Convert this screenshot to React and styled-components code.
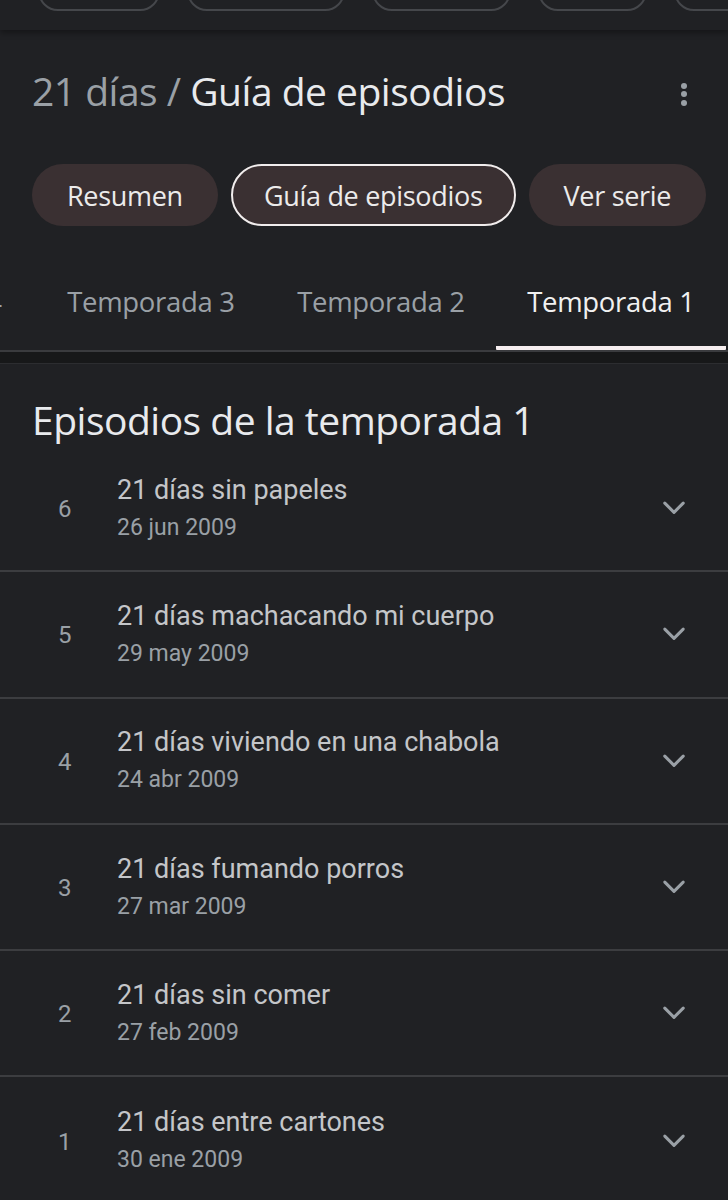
import React from 'react'
import styled, { createGlobalStyle } from 'styled-components'

const GlobalStyle = createGlobalStyle`
    html, body {
        margin: 0;
        padding: 0;
        background-color: #202124;
    }
`

const Page = styled.div`
    width: 728px;
    height: 1200px;
    overflow: hidden;
    background-color: #202124;
    font-family: Roboto, "Liberation Sans", sans-serif;
`

const TopStrip = styled.div`
    height: 30px;
    display: flex;
    gap: 27px;
    padding-left: 38px;
    overflow: hidden;
    box-shadow: 0 3px 6px rgba(0, 0, 0, 0.35);
`

const GhostChip = styled.div`
    flex: none;
    width: ${p => p.w}px;
    height: 40px;
    margin-top: -33px;
    border: 2px solid #45474b;
    border-radius: 20px;
`

const Header = styled.div`
    display: flex;
    align-items: center;
    justify-content: space-between;
    padding: 35px 41px 0 32px;
    height: 52px;
`

const Title = styled.h1`
    margin: 0;
    font-family: "Open Sans", sans-serif;
    font-size: 39px;
    line-height: 52px;
    font-weight: 400;
    letter-spacing: -0.5px;
    color: #e8eaed;
    white-space: nowrap;
`

const Crumb = styled.span`
    color: #9aa0a6;
`

const Kebab = styled.div`
    display: flex;
    flex-direction: column;
    gap: 2.5px;
    margin-top: 6px;
    span {
        width: 6px;
        height: 6px;
        border-radius: 50%;
        background-color: #9aa0a6;
    }
`

const ChipRow = styled.div`
    display: flex;
    gap: 13px;
    padding: 47px 0 0 32px;
`

const Chip = styled.div`
    flex: none;
    box-sizing: border-box;
    height: 62px;
    padding: 0 ${p => p.px}px;
    display: flex;
    align-items: center;
    border-radius: 31px;
    background-color: #3a3032;
    border: 2px solid ${p => (p.active ? '#f1eded' : 'transparent')};
    font-family: "Open Sans", sans-serif;
    font-size: 27px;
    color: #ecebeb;
    letter-spacing: -0.3px;
    white-space: nowrap;
`

const TabScroller = styled.div`
    margin-top: 30px;
    overflow: hidden;
    border-bottom: 2px solid #3a3b3e;
`

const TabStrip = styled.div`
    display: flex;
    margin-left: -200px;
`

const Tab = styled.div`
    flex: none;
    width: ${p => p.w || 230}px;
    height: 94px;
    box-sizing: border-box;
    display: flex;
    align-items: center;
    justify-content: center;
    font-family: "Open Sans", sans-serif;
    font-size: 27.5px;
    letter-spacing: -0.3px;
    white-space: nowrap;
    color: ${p => (p.active ? '#f1f1f1' : '#9aa0a6')};
    border-bottom: 4px solid ${p => (p.active ? '#f6eef0' : 'transparent')};
    border-radius: 0 0 1px 1px;
`

const Band = styled.div`
    height: 11px;
    background-color: #171819;
    border-bottom: 1px solid #2c2d30;
`

const SectionTitle = styled.h2`
    margin: 0;
    padding: 31px 0 2px 32px;
    font-family: "Open Sans", sans-serif;
    font-size: 39px;
    line-height: 49px;
    font-weight: 400;
    letter-spacing: -0.5px;
    color: #e8eaed;
`

const List = styled.div`
    display: flex;
    flex-direction: column;
`

const Row = styled.div`
    display: flex;
    align-items: center;
    height: 126.3px;
    box-sizing: border-box;
    padding: 0 41px 0 0;
    border-bottom: ${p => (p.last ? 'none' : '2px solid #3c3d40')};
`

const Num = styled.div`
    width: 117px;
    box-sizing: border-box;
    padding-left: 58px;
    font-size: 24px;
    color: #9aa0a6;
    margin-top: 2px;
`

const Info = styled.div`
    flex: 1;
    display: flex;
    flex-direction: column;
    gap: 8px;
    margin-top: -2px;
`

const EpTitle = styled.div`
    font-size: 27px;
    line-height: 32px;
    color: #c4c6c9;
`

const EpDate = styled.div`
    font-size: 23px;
    line-height: 27px;
    color: #9aa0a6;
`

const Chevron = () => (
    <svg width="26" height="26" viewBox="0 0 24 24">
        <path d="M3.5 7.5l8.5 8.5 8.5-8.5" fill="none" stroke="#9aa0a6" strokeWidth="2.8" strokeLinecap="round" strokeLinejoin="round" />
    </svg>
)

const episodes = [
    { n: 6, title: '21 días sin papeles', date: '26 jun 2009' },
    { n: 5, title: '21 días machacando mi cuerpo', date: '29 may 2009' },
    { n: 4, title: '21 días viviendo en una chabola', date: '24 abr 2009' },
    { n: 3, title: '21 días fumando porros', date: '27 mar 2009' },
    { n: 2, title: '21 días sin comer', date: '27 feb 2009' },
    { n: 1, title: '21 días entre cartones', date: '30 ene 2009' },
]

const App = () => {
    return (
        <Page>
            <GlobalStyle />
            <TopStrip>
                <GhostChip w={118} />
                <GhostChip w={154} />
                <GhostChip w={135} />
                <GhostChip w={105} />
                <GhostChip w={120} />
            </TopStrip>

            <Header>
                <Title>
                    <Crumb>21 días / </Crumb>Guía de episodios
                </Title>
                <Kebab>
                    <span />
                    <span />
                    <span />
                </Kebab>
            </Header>

            <ChipRow>
                <Chip px={33}>Resumen</Chip>
                <Chip px={31} active>Guía de episodios</Chip>
                <Chip px={33}>Ver serie</Chip>
            </ChipRow>

            <TabScroller>
                <TabStrip>
                    <Tab w={236}>Temporada 4</Tab>
                    <Tab>Temporada 3</Tab>
                    <Tab>Temporada 2</Tab>
                    <Tab active>Temporada 1</Tab>
                </TabStrip>
            </TabScroller>
            <Band />

            <SectionTitle>Episodios de la temporada 1</SectionTitle>

            <List>
                {episodes.map((ep, i) => (
                    <Row key={ep.n} last={i === episodes.length - 1}>
                        <Num>{ep.n}</Num>
                        <Info>
                            <EpTitle>{ep.title}</EpTitle>
                            <EpDate>{ep.date}</EpDate>
                        </Info>
                        <Chevron />
                    </Row>
                ))}
            </List>
        </Page>
    )
}

export default App
